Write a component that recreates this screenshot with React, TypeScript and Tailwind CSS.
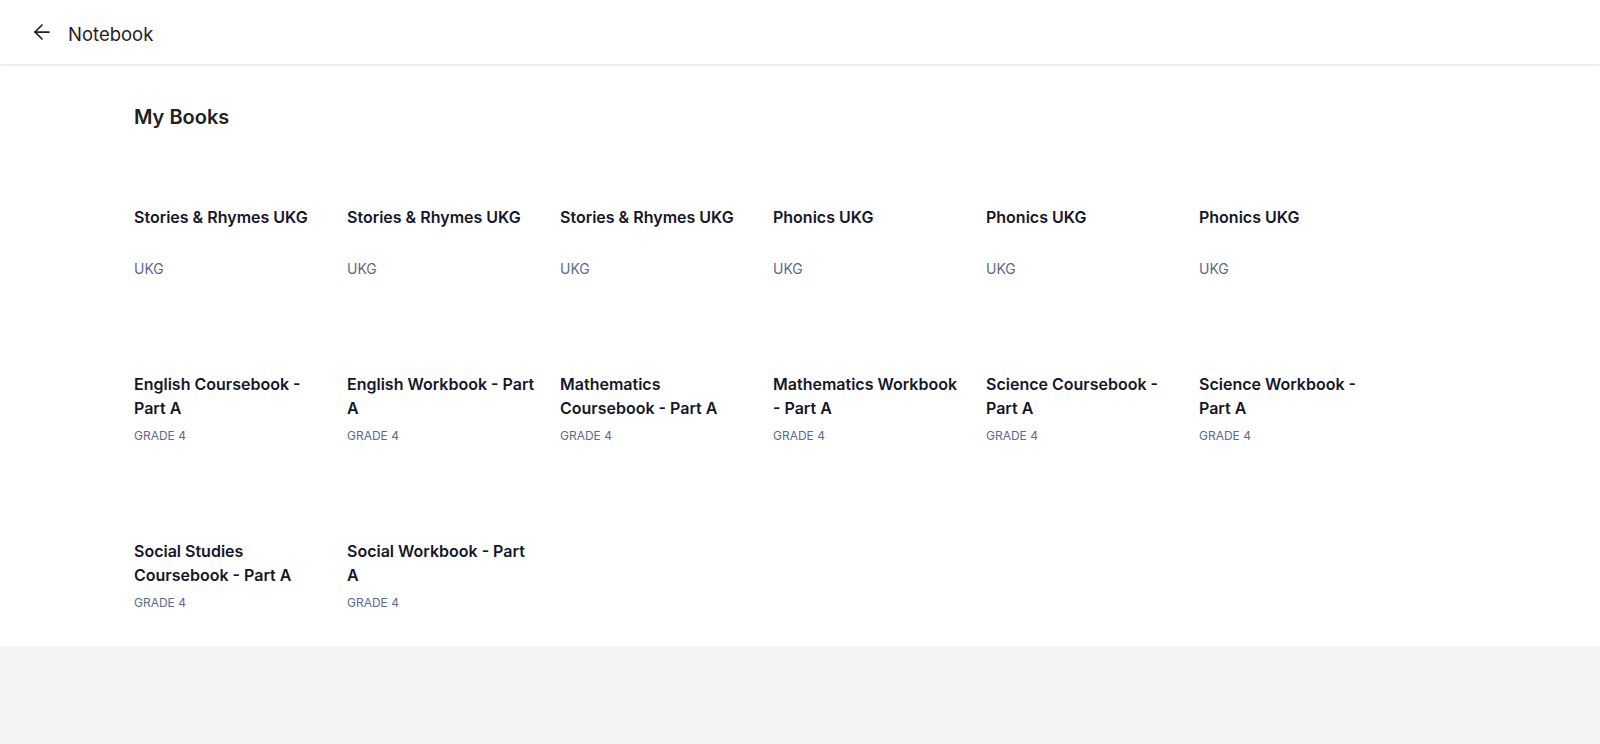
import React from "react";
import { ArrowLeft } from "lucide-react";

type Book = { title: string; sub: string; kind: "ukg" | "grade" };

const books: Book[] = [
  { title: "Stories & Rhymes UKG", sub: "UKG", kind: "ukg" },
  { title: "Stories & Rhymes UKG", sub: "UKG", kind: "ukg" },
  { title: "Stories & Rhymes UKG", sub: "UKG", kind: "ukg" },
  { title: "Phonics UKG", sub: "UKG", kind: "ukg" },
  { title: "Phonics UKG", sub: "UKG", kind: "ukg" },
  { title: "Phonics UKG", sub: "UKG", kind: "ukg" },
  { title: "English Coursebook - Part A", sub: "GRADE 4", kind: "grade" },
  { title: "English Workbook - Part A", sub: "GRADE 4", kind: "grade" },
  { title: "Mathematics Coursebook - Part A", sub: "GRADE 4", kind: "grade" },
  { title: "Mathematics Workbook - Part A", sub: "GRADE 4", kind: "grade" },
  { title: "Science Coursebook - Part A", sub: "GRADE 4", kind: "grade" },
  { title: "Science Workbook - Part A", sub: "GRADE 4", kind: "grade" },
  { title: "Social Studies Coursebook - Part A", sub: "GRADE 4", kind: "grade" },
  { title: "Social Workbook - Part A", sub: "GRADE 4", kind: "grade" },
];

export default function App() {
  return (
    <div
      className="min-h-screen bg-[#f4f4f4]"
      style={{ fontFamily: "Inter, 'Noto Sans', sans-serif" }}
    >
      <header className="relative z-10 flex h-16 items-center bg-white pl-[30px] shadow-[0_1px_3px_rgba(0,0,0,0.12)]">
        <ArrowLeft className="h-6 w-6 text-[#222]" strokeWidth={1.75} />
        <span className="ml-[14px] mt-[5px] text-[18.5px] text-[#222]">Notebook</span>
      </header>
      <main className="bg-white pb-[35px] pl-[134px] pt-[39px]">
        <h1 className="text-[20px] font-semibold leading-7 text-[#212121]">My Books</h1>
        <div className="mt-[74px] grid grid-cols-[repeat(6,190px)] gap-x-[23px] gap-y-[95px]">
          {books.map((b, i) => (
            <div key={i} className="flex flex-col">
              <div className="min-h-[48px] text-[16px] font-semibold leading-6 text-[#16172b]">
                {b.title}
              </div>
              <div
                className={
                  b.kind === "ukg"
                    ? "mt-[8px] text-[14px] leading-4 text-[#5b6a8e]"
                    : "mt-[8px] text-[12px] leading-4 text-[#5b6a8e]"
                }
              >
                {b.sub}
              </div>
            </div>
          ))}
        </div>
      </main>
    </div>
  );
}
